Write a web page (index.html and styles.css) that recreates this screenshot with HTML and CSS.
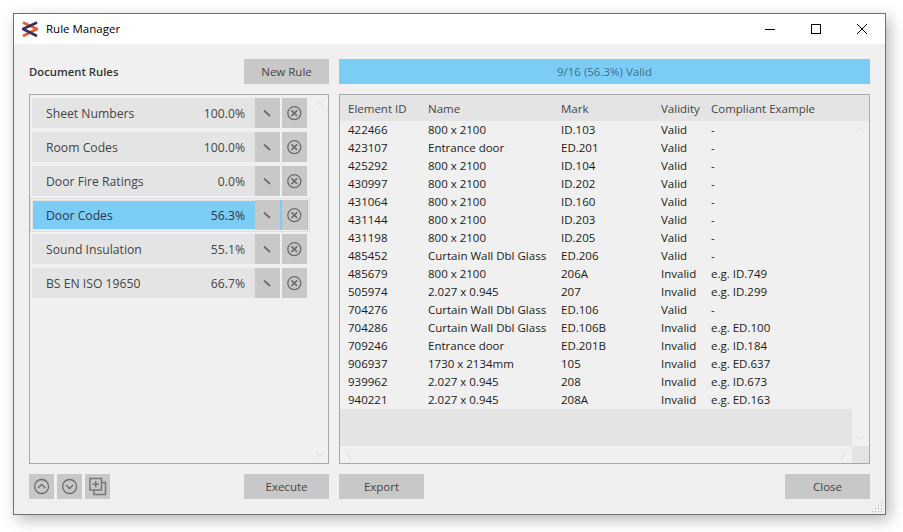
FILE: index.html
```html
<!DOCTYPE html>
<html lang="en">
<head>
<meta charset="utf-8">
<title>Rule Manager</title>
<link rel="stylesheet" href="styles.css">
</head>
<body>
<div class="window">
  <header class="titlebar">
    <svg class="logo" width="16" height="17" viewBox="0 0 16 17">
      <path d="M1 1.5 15 8 1 15" stroke="#ec5a2c" stroke-width="2.6" fill="none"/>
      <path d="M15 1.5 1 8 15 15" stroke="#38305f" stroke-width="2.8" fill="none"/>
    </svg>
    <span class="title">Rule Manager</span>
    <div class="caption">
      <span class="cap-btn"><svg width="12" height="12" viewBox="0 0 12 12"><path d="M1 6.5h10" stroke="#000"/></svg></span>
      <span class="cap-btn"><svg width="12" height="12" viewBox="0 0 12 12"><rect x="1.5" y="1.5" width="9" height="9" fill="none" stroke="#000"/></svg></span>
      <span class="cap-btn"><svg width="12" height="12" viewBox="0 0 12 12"><path d="M1 1 11 11M11 1 1 11" stroke="#000"/></svg></span>
    </div>
  </header>
  <main class="content">
    <section class="left">
      <div class="bar">
        <strong class="heading">Document Rules</strong>
        <button class="btn">New Rule</button>
      </div>
      <div class="panel rules">
        <ul class="rule-list">
          <li class="rule"><div class="rule-main"><span>Sheet Numbers</span><span>100.0%</span></div><button class="icon"><svg class="i-edit" viewBox="0 0 25 30"><path d="M9 12.5 15 18" /></svg></button><button class="icon"><svg class="i-x" viewBox="0 0 25 30"><circle cx="12.3" cy="15.2" r="6.5"/><path class="x" d="M9.5 12.4 15.1 18M15.1 12.4 9.5 18"/></svg></button></li>
          <li class="rule"><div class="rule-main"><span>Room Codes</span><span>100.0%</span></div><button class="icon"><svg class="i-edit" viewBox="0 0 25 30"><path d="M9 12.5 15 18" /></svg></button><button class="icon"><svg class="i-x" viewBox="0 0 25 30"><circle cx="12.3" cy="15.2" r="6.5"/><path class="x" d="M9.5 12.4 15.1 18M15.1 12.4 9.5 18"/></svg></button></li>
          <li class="rule"><div class="rule-main"><span>Door Fire Ratings</span><span>0.0%</span></div><button class="icon"><svg class="i-edit" viewBox="0 0 25 30"><path d="M9 12.5 15 18" /></svg></button><button class="icon"><svg class="i-x" viewBox="0 0 25 30"><circle cx="12.3" cy="15.2" r="6.5"/><path class="x" d="M9.5 12.4 15.1 18M15.1 12.4 9.5 18"/></svg></button></li>
          <li class="rule selected"><div class="rule-main"><span>Door Codes</span><span>56.3%</span></div><button class="icon"><svg class="i-edit" viewBox="0 0 25 30"><path d="M9 12.5 15 18" /></svg></button><button class="icon"><svg class="i-x" viewBox="0 0 25 30"><circle cx="12.3" cy="15.2" r="6.5"/><path class="x" d="M9.5 12.4 15.1 18M15.1 12.4 9.5 18"/></svg></button></li>
          <li class="rule"><div class="rule-main"><span>Sound Insulation</span><span>55.1%</span></div><button class="icon"><svg class="i-edit" viewBox="0 0 25 30"><path d="M9 12.5 15 18" /></svg></button><button class="icon"><svg class="i-x" viewBox="0 0 25 30"><circle cx="12.3" cy="15.2" r="6.5"/><path class="x" d="M9.5 12.4 15.1 18M15.1 12.4 9.5 18"/></svg></button></li>
          <li class="rule"><div class="rule-main"><span>BS EN ISO 19650</span><span>66.7%</span></div><button class="icon"><svg class="i-edit" viewBox="0 0 25 30"><path d="M9 12.5 15 18" /></svg></button><button class="icon"><svg class="i-x" viewBox="0 0 25 30"><circle cx="12.3" cy="15.2" r="6.5"/><path class="x" d="M9.5 12.4 15.1 18M15.1 12.4 9.5 18"/></svg></button></li>
        </ul>
        <div class="vscroll">
          <svg width="17" height="17" viewBox="0 0 17 17"><path d="M4.5 10.5 8.5 6.5 12.5 10.5"/></svg>
          <svg width="17" height="17" viewBox="0 0 17 17"><path d="M4.5 6.5 8.5 10.5 12.5 6.5"/></svg>
        </div>
      </div>
      <div class="bar">
        <div class="tools">
          <button class="tool"><svg viewBox="0 0 25 25"><circle cx="12.6" cy="12.5" r="7"/><path d="M9 14 12.6 10.5 16.2 14"/></svg></button>
          <button class="tool"><svg viewBox="0 0 25 25"><circle cx="12.6" cy="12.5" r="7"/><path d="M9 11 12.6 14.5 16.2 11"/></svg></button>
          <button class="tool"><svg class="dup" viewBox="0 0 25 25"><path d="M5 4.5H16.5V16H5ZM16.5 8.5H20.5V20.5H9V16M10.7 7V13.5M7.5 10.3H14"/></svg></button>
        </div>
        <button class="btn">Execute</button>
      </div>
    </section>
    <section class="right">
      <div class="progress">9/16 (56.3%) Valid</div>
      <div class="panel grid-panel">
        <div class="thead">
          <span>Element ID</span><span>Name</span><span>Mark</span><span>Validity</span><span>Compliant Example</span>
        </div>
        <div class="body">
          <div class="rows">
            <div class="row"><span>422466</span><span>800 x 2100</span><span>ID.103</span><span>Valid</span><span>-</span></div>
            <div class="row"><span>423107</span><span>Entrance door</span><span>ED.201</span><span>Valid</span><span>-</span></div>
            <div class="row"><span>425292</span><span>800 x 2100</span><span>ID.104</span><span>Valid</span><span>-</span></div>
            <div class="row"><span>430997</span><span>800 x 2100</span><span>ID.202</span><span>Valid</span><span>-</span></div>
            <div class="row"><span>431064</span><span>800 x 2100</span><span>ID.160</span><span>Valid</span><span>-</span></div>
            <div class="row"><span>431144</span><span>800 x 2100</span><span>ID.203</span><span>Valid</span><span>-</span></div>
            <div class="row"><span>431198</span><span>800 x 2100</span><span>ID.205</span><span>Valid</span><span>-</span></div>
            <div class="row"><span>485452</span><span>Curtain Wall Dbl Glass</span><span>ED.206</span><span>Valid</span><span>-</span></div>
            <div class="row"><span>485679</span><span>800 x 2100</span><span>206A</span><span>Invalid</span><span>e.g. ID.749</span></div>
            <div class="row"><span>505974</span><span>2.027 x 0.945</span><span>207</span><span>Invalid</span><span>e.g. ID.299</span></div>
            <div class="row"><span>704276</span><span>Curtain Wall Dbl Glass</span><span>ED.106</span><span>Valid</span><span>-</span></div>
            <div class="row"><span>704286</span><span>Curtain Wall Dbl Glass</span><span>ED.106B</span><span>Invalid</span><span>e.g. ED.100</span></div>
            <div class="row"><span>709246</span><span>Entrance door</span><span>ED.201B</span><span>Invalid</span><span>e.g. ID.184</span></div>
            <div class="row"><span>906937</span><span>1730 x 2134mm</span><span>105</span><span>Invalid</span><span>e.g. ED.637</span></div>
            <div class="row"><span>939962</span><span>2.027 x 0.945</span><span>208</span><span>Invalid</span><span>e.g. ID.673</span></div>
            <div class="row"><span>940221</span><span>2.027 x 0.945</span><span>208A</span><span>Invalid</span><span>e.g. ED.163</span></div>
            <div class="rows-fill"></div>
          </div>
          <div class="vscroll table-v">
            <svg width="17" height="17" viewBox="0 0 17 17"><path d="M4.5 10.5 8.5 6.5 12.5 10.5"/></svg>
            <svg width="17" height="17" viewBox="0 0 17 17"><path d="M4.5 6.5 8.5 10.5 12.5 6.5"/></svg>
          </div>
        </div>
        <div class="hscroll-row">
          <div class="hscroll">
            <svg width="17" height="17" viewBox="0 0 17 17"><path d="M10.5 4.5 6.5 8.5 10.5 12.5"/></svg>
            <svg width="17" height="17" viewBox="0 0 17 17"><path d="M6.5 4.5 10.5 8.5 6.5 12.5"/></svg>
          </div>
          <div class="corner"></div>
        </div>
      </div>
      <div class="bar">
        <button class="btn">Export</button>
        <button class="btn">Close</button>
      </div>
    </section>
  </main>
  <svg class="grip" width="12" height="12" viewBox="0 0 12 12"><path d="M9 1h1v1H9zM9 4h1v1H9zM6 4h1v1H6zM9 7h1v1H9zM6 7h1v1H6zM3 7h1v1H3zM9 10h1v1H9zM6 10h1v1H6zM3 10h1v1H3zM0 10h1v1H0z" fill="#a8a8a8"/></svg>
</div>
</body>
</html>
```

FILE: styles.css
```css
* { box-sizing: border-box; }
html, body { margin: 0; height: 100%; }
body {
  background: #fff;
  font-family: "Open Sans", "Noto Sans", sans-serif;
  font-size: 11.5px;
  line-height: 15px;
  color: #222;
  overflow: hidden;
  padding: 13px 0 0 13px;
}
button { font: inherit; border: 0; padding: 0; cursor: default; }
.window {
  position: relative;
  width: 873px;
  height: 502px;
  background: #f0f0f0;
  border: 1px solid #707070;
  box-shadow: 4px 5px 14px rgba(0,0,0,.28);
  display: flex;
  flex-direction: column;
}
.titlebar {
  height: 30px;
  background: #fff;
  display: flex;
  align-items: center;
  padding-left: 8px;
  flex: none;
}
.logo { flex: none; margin-right: 8px; }
.title { color: #000; padding-bottom: 2px; }
.caption { margin-left: auto; display: flex; }
.cap-btn { width: 46px; height: 30px; display: flex; align-items: center; justify-content: center; }
.content {
  flex: 1;
  display: flex;
  gap: 10px;
  padding: 15px;
  min-height: 0;
}
.left { width: 300px; display: flex; flex-direction: column; gap: 10px; }
.right { flex: 1; display: flex; flex-direction: column; gap: 10px; min-width: 0; }
.bar { height: 25px; flex: none; display: flex; justify-content: space-between; align-items: center; }
.heading { font-weight: 600; color: #333; font-size: 11.3px; }
.btn { width: 85px; height: 25px; background: #c8c8c8; color: #444; }
.panel { flex: 1; min-height: 0; border: 1px solid #a8a8a8; display: flex; }
.rules { padding: 3px 0 0 2px; justify-content: space-between; }
.rule-list { list-style: none; margin: 0; padding: 0; display: flex; flex-direction: column; gap: 4px; }
.rule { display: flex; height: 30px; width: 276px; gap: 2px; }
.rule-main {
  width: 223px;
  margin-right: -2px;
  background: #e4e4e4;
  color: #444;
  font-size: 12.2px;
  display: flex;
  align-items: center;
  justify-content: space-between;
  padding: 0 10px 0 14px;
}
.selected { background: #7ccdf6; outline: 1px solid #dedede; outline-offset: 1px; }
.selected .rule-main {
  background: #7ccdf6;
  color: #334;
  border: 1px solid #e4e4e4;
  border-right: 0;
  padding-left: 13px;
}
.icon { width: 25px; height: 30px; background: #c8c8c8; display: block; }
.icon svg { width: 25px; height: 30px; display: block; fill: none; stroke: #6c6c6c; stroke-width: 1.3; }
.icon .i-edit { stroke-width: 1.7; }
.x { stroke-width: 1.7; }
.vscroll { width: 17px; display: flex; flex-direction: column; justify-content: space-between; flex: none; margin-top: -3px; }
.vscroll svg, .hscroll svg { display: block; fill: none; stroke: #dcdcdc; stroke-width: 1; }
.tools { display: flex; gap: 3px; }
.tool { width: 25px; height: 25px; background: #c8c8c8; }
.tool svg { width: 25px; height: 25px; display: block; fill: none; stroke: #6c6c6c; stroke-width: 1.3; }
.tool .dup { stroke: #777; stroke-width: 1.5; }
.progress { height: 25px; flex: none; background: #7ccdf6; color: #3a6f92; display: flex; align-items: center; justify-content: center; }
.grid-panel { flex-direction: column; }
.thead, .row { display: grid; grid-template-columns: 80px 133px 100px 50px 1fr; padding: 0; }
.thead > span, .row > span { padding-left: 8px; white-space: nowrap; }
.thead { height: 26px; background: #e4e4e4; color: #444; align-items: center; flex: none; }
.body { flex: 1; display: flex; min-height: 0; }
.rows { flex: 1; display: flex; flex-direction: column; min-width: 0; }
.row { height: 18px; align-items: center; color: #1a1a1a; padding-bottom: 2px; }
.rows-fill { flex: 1; background: #e4e4e4; }
.table-v { margin-top: 0; }
.hscroll-row { height: 17px; display: flex; flex: none; }
.hscroll { flex: 1; display: flex; justify-content: space-between; }
.corner { width: 17px; background: #e4e4e4; }
.grip { position: absolute; right: 1px; bottom: 1px; }
```
